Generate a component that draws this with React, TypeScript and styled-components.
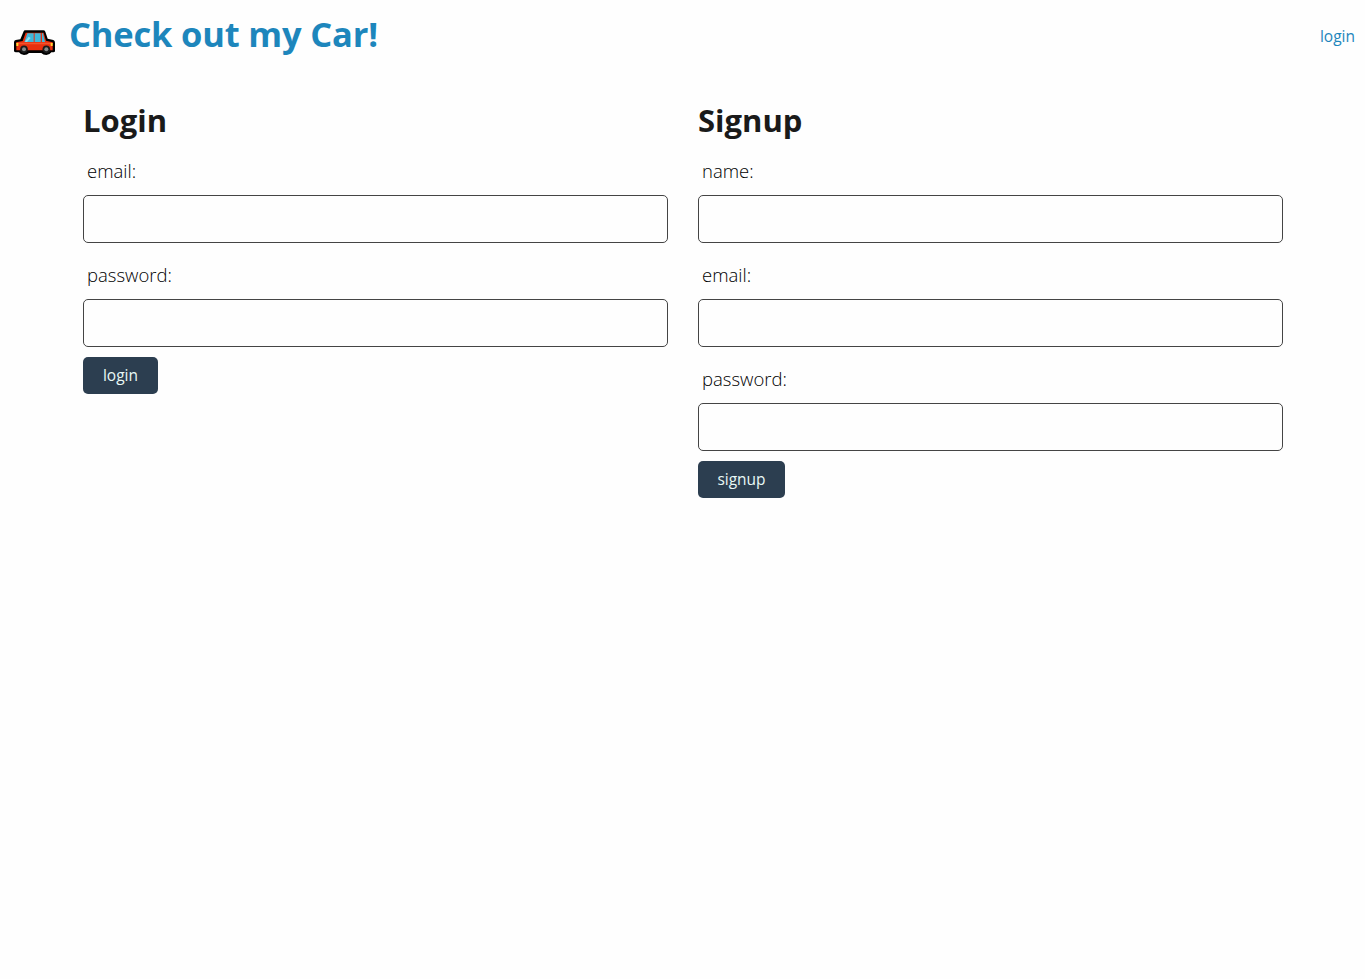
import React from "react";
import styled, { createGlobalStyle } from "styled-components";

const GlobalStyle = createGlobalStyle`
  * { box-sizing: border-box; }
  body {
    margin: 0;
    background: #fefefe;
    color: #1a1a1a;
    font-family: "Open Sans", "Noto Sans", sans-serif;
  }
`;

const Header = styled.header`
  display: flex;
  align-items: center;
  height: 72px;
  padding: 0 10px 0 14px;
  color: #1d86bc;
`;

const CarIcon = styled.svg`
  display: block;
  width: 41px;
  height: 26px;
  margin: 13px 14px 0 0;
  flex: none;
`;

const Title = styled.h1`
  margin: 0;
  font-size: 34.5px;
  line-height: 48px;
  font-weight: 700;
  letter-spacing: -0.18px;
  padding-bottom: 4px;
`;

const NavLink = styled.a`
  margin-left: auto;
  color: #1d86bc;
  font-size: 15.5px;
  line-height: 24px;
  text-decoration: none;
`;

const Main = styled.main`
  display: grid;
  grid-template-columns: 585px 585px;
  gap: 30px;
  padding: 27px 0 0 83px;
`;

const Form = styled.form`
  display: flex;
  flex-direction: column;
  align-items: flex-start;
`;

const Heading = styled.h2`
  margin: 0 0 8px;
  font-size: 31px;
  line-height: 42px;
  font-weight: 700;
`;

const Field = styled.label`
  display: block;
  width: 100%;
  margin-bottom: 10px;
`;

const Caption = styled.span`
  display: block;
  height: 46px;
  padding: 8px 0 0 4px;
  color: #000;
  font-size: 18.5px;
  line-height: 27px;
  font-weight: 300;
`;

const Input = styled.input`
  display: block;
  width: 100%;
  height: 48px;
  padding: 0 10px;
  border: 1px solid #444;
  border-radius: 5px;
  background: #fefefe;
  outline: none;
  font: inherit;
`;

const Button = styled.button<{ $width: number }>`
  width: ${(p) => p.$width}px;
  height: 37px;
  padding: 0 0 2px;
  border: 0;
  border-radius: 5px;
  background: #2c3e50;
  color: #e8f8f5;
  font-family: inherit;
  font-size: 15.5px;
  line-height: 24px;
`;

const Car = () => (
  <CarIcon viewBox="12 17 123 78" aria-hidden="true">
    <path
      d="M45 18H100Q104 18 106 22L113 43L130 47Q135 49 135 55V80Q135 84 130 84H124Q119 92 109 92Q99 92 94 86H57Q52 92 42 92Q32 92 27 84H18Q12 84 12 79V54Q12 48 17 47L31 45L41 21Q42 18 45 18Z"
      fill="#000"
    />
    <path d="M47 25H101L108 49L128 54V78H19V54L38 50Z" fill="#e8300f" />
    <path d="M19 55H128V60H19Z" fill="#f2532c" />
    <path d="M52 27H71V53H43ZM74 27H92V53H74ZM96 27H99L105 53H96Z" fill="#3eb8dc" />
    <path d="M56 37L46 50V53H51L62 41Z" fill="#8be2f2" />
    <path d="M19 56H25V65H19ZM122 56H128V65H122Z" fill="#ffd52e" />
    <circle cx="42" cy="75" r="11.5" fill="#1b1b1b" />
    <circle cx="109" cy="75" r="11.5" fill="#1b1b1b" />
    <circle cx="42" cy="75" r="6" fill="#858b8b" />
    <circle cx="109" cy="75" r="6" fill="#858b8b" />
  </CarIcon>
);

const TextField = ({ label, type = "text" }: { label: string; type?: string }) => (
  <Field>
    <Caption>{label}</Caption>
    <Input type={type} />
  </Field>
);

export default function App() {
  return (
    <>
      <GlobalStyle />
      <Header>
        <Car />
        <Title>Check out my Car!</Title>
        <NavLink>login</NavLink>
      </Header>
      <Main>
        <Form>
          <Heading>Login</Heading>
          <TextField label="email:" />
          <TextField label="password:" type="password" />
          <Button type="button" $width={75}>login</Button>
        </Form>
        <Form>
          <Heading>Signup</Heading>
          <TextField label="name:" />
          <TextField label="email:" />
          <TextField label="password:" type="password" />
          <Button type="button" $width={87}>signup</Button>
        </Form>
      </Main>
    </>
  );
}
